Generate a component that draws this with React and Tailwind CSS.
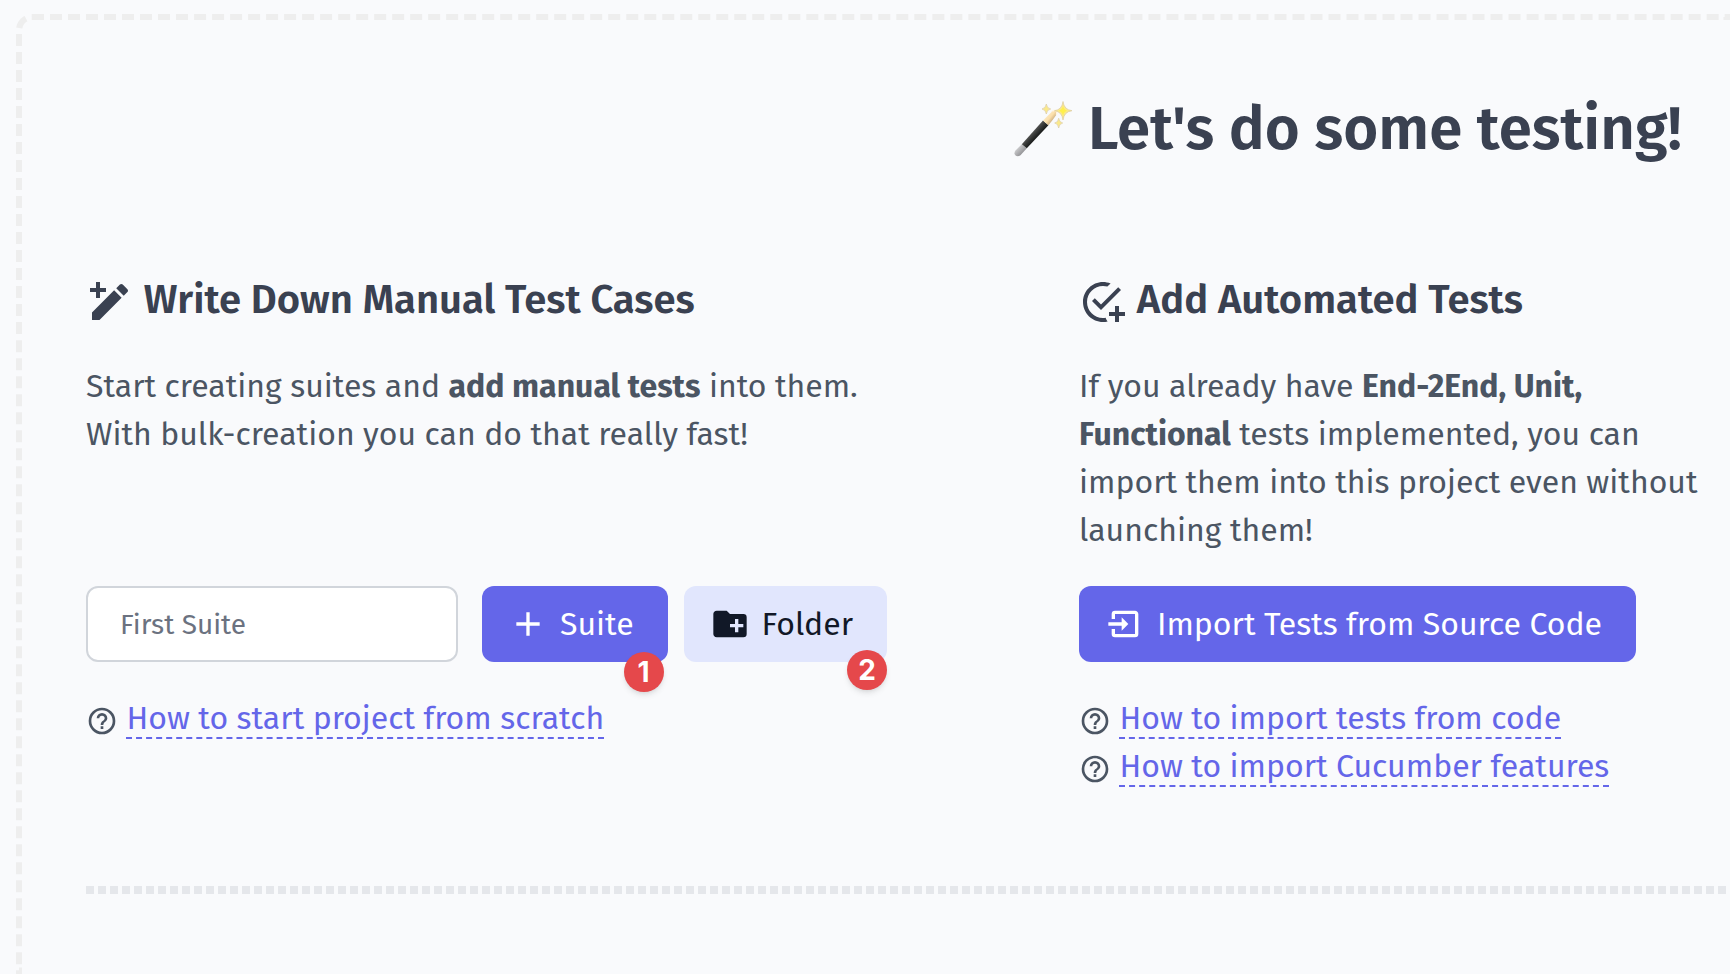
const PATHS = {
  pencilPlus:
    "M20.71,7.04C21.1,6.65 21.1,6 20.71,5.63L18.37,3.29C18,2.9 17.35,2.9 16.96,3.29L15.12,5.12L18.87,8.87M3,17.25V21H6.75L17.81,9.93L14.06,6.18L3,17.25ZM7,2V5H10V7H7V10H5V7H2V5H5V2H7Z",
  checkPlus:
    "M14.3 21.7C13.6 21.9 12.8 22 12 22C6.5 22 2 17.5 2 12S6.5 2 12 2C13.3 2 14.6 2.3 15.8 2.7L14.2 4.3C13.5 4.1 12.8 4 12 4C7.6 4 4 7.6 4 12S7.6 20 12 20C12.4 20 12.9 20 13.3 19.9C13.5 20.6 13.9 21.2 14.3 21.7M7.9 10.1L6.5 11.5L11 16L21 6L19.6 4.6L11 13.2L7.9 10.1M18 14V17H15V19H18V22H20V19H23V17H20V14H18Z",
  plus: "M19,13H13V19H11V13H5V11H11V5H13V11H19V13Z",
  folderPlus:
    "M10,4L12,6H20A2,2 0 0,1 22,8V18A2,2 0 0,1 20,20H4C2.89,20 2,19.1 2,18V6C2,4.89 2.89,4 4,4H10M15,9V12H12V14H15V17H17V14H20V12H17V9H15Z",
  importBox:
    "M14,12L10,8V11H2V13H10V16M20,18V6C20,4.89 19.1,4 18,4H6A2,2 0 0,0 4,6V9H6V6H18V18H6V15H4V18A2,2 0 0,0 6,20H18A2,2 0 0,0 20,18Z",
  help: "M11,18H13V16H11V18M12,2A10,10 0 0,0 2,12A10,10 0 0,0 12,22A10,10 0 0,0 22,12A10,10 0 0,0 12,2M12,20C7.59,20 4,16.41 4,12C4,7.59 7.59,4 12,4C16.41,4 20,7.59 20,12C20,16.41 16.41,20 12,20M12,6A4,4 0 0,0 8,10H10A2,2 0 0,1 12,8A2,2 0 0,1 14,10C14,12 11,11.75 11,15H13C13,12.75 16,12.5 16,10A4,4 0 0,0 12,6Z",
};

function Icon({ name, className }) {
  return (
    <svg viewBox="0 0 24 24" fill="currentColor" aria-hidden="true" className={className}>
      <path d={PATHS[name]} />
    </svg>
  );
}

function Wand() {
  return (
    <svg viewBox="2 1 60 60" aria-hidden="true" className="inline-block h-[60px] w-[60px] overflow-visible align-middle">
      <defs>
        <linearGradient id="barrel" gradientUnits="userSpaceOnUse" x1="21" y1="29" x2="27" y2="34.500">
          <stop offset="0" stopColor="#5c5c5a" />
          <stop offset="0.45" stopColor="#3b3c3b" />
          <stop offset="1" stopColor="#171918" />
        </linearGradient>
        <linearGradient id="tip" gradientUnits="userSpaceOnUse" x1="36" y1="12" x2="43" y2="18">
          <stop offset="0" stopColor="#fbe9c4" />
          <stop offset="0.5" stopColor="#fbdfaa" />
          <stop offset="1" stopColor="#c7a87a" />
        </linearGradient>
        <linearGradient id="cap" gradientUnits="userSpaceOnUse" x1="5" y1="45" x2="11" y2="51">
          <stop offset="0" stopColor="#d9d9da" />
          <stop offset="1" stopColor="#98989b" />
        </linearGradient>
      </defs>
      <path d="M10.800 42.200L15.800 46.300L9.500 53.200Q6.500 55.300 4.300 53.300Q2.600 51.200 4.500 48.600Z" fill="url(#cap)" />
      <path d="M10.800 42.200L32 18.400L37.400 23.200L15.800 46.300Z" fill="url(#barrel)" />
      <path d="M32 18.400L41.300 9.300Q43.500 7.500 45.200 9Q46.700 10.500 45.200 13Q41.500 18.500 37.400 23.200Z" fill="url(#tip)" />
      <path d="M41.500 9.200Q43.600 7.500 45.200 9Q46.700 10.500 45.300 12.800" fill="none" stroke="#fff6e4" strokeWidth="1.400" />
      <g fill="#fbe98a" stroke="#dccba0" strokeWidth="0.700" strokeLinejoin="round">
        <path d="M52 -0.500Q53 7.700 61 8.700Q53 9.700 52 18Q51 9.700 43.500 8.700Q51 7.700 52 -0.500Z" />
        <path d="M35.300 2Q35.800 6.400 39.700 7Q35.800 7.600 35.300 12Q34.800 7.600 31 7Q34.800 6.400 35.300 2Z" />
        <path d="M47.700 16.200Q48.200 20.400 51.700 21Q48.200 21.600 47.700 26Q47.200 21.600 43.700 21Q47.200 20.400 47.700 16.200Z" />
      </g>
      <path d="M52 4Q52.900 7.800 56 8.700Q52.900 9.600 52 13.500Q51.100 9.600 48 8.700Q51.100 7.800 52 4Z" fill="#fff04a" />
    </svg>
  );
}

function SectionTitle({ icon, children }) {
  return (
    <h2 className="text-[40px] leading-[60px] font-semibold text-[#3a4151]">
      <Icon name={icon} className="inline-block size-12 align-middle" /> {children}
    </h2>
  );
}

function HelpLink({ children }) {
  return (
    <li>
      <Icon name="help" className="inline-block size-8 align-middle" />{" "}
      <a href="#" className="border-b-2 border-dashed border-[#6466e9] text-[#6466e9]">
        {children}
      </a>
    </li>
  );
}

function Button({ icon, tone, children }) {
  return (
    <button
      type="button"
      className={`flex h-[76px] items-center gap-3 rounded-xl pr-[34px] pl-[26px] whitespace-nowrap ${tone}`}
    >
      <Icon name={icon} className="size-10 shrink-0" />
      {children}
    </button>
  );
}

function Badge({ className, children }) {
  return (
    <span
      className={`absolute flex size-10 items-center justify-center rounded-full bg-[#e5484b] font-['Inter',sans-serif] text-[28px] leading-none font-bold text-white shadow-md ${className}`}
    >
      {children}
    </span>
  );
}

export default function App() {
  return (
    <div className="flex min-h-screen flex-col overflow-x-hidden bg-[#f9fafc] pt-3.5 pl-4 font-['Fira_Sans','Noto_Sans',sans-serif] text-[32px] leading-[48px] text-[#4b5563]">
      <main className="flex-1 rounded-tl-2xl border-t-6 border-l-6 border-dashed border-[#eeeeee] pt-[73px] pl-16">
        <h1 className="pr-12 text-right text-[60px] leading-[72px] font-semibold whitespace-nowrap text-[#3a4151]">
          <Wand /> Let's do some testing!
        </h1>

        <div className="mt-[105px] grid grid-cols-[993fr_651fr]">
          <section>
            <SectionTitle icon="pencilPlus">Write Down Manual Test Cases</SectionTitle>
            <p className="mt-8 min-h-48 max-w-[800px]">
              Start creating suites and <strong className="font-bold">add manual tests</strong> into them. With
              bulk-creation you can do that really fast!
            </p>
            <form className="mt-8 flex">
              <input
                type="text"
                aria-label="First Suite"
                placeholder="First Suite"
                className="mr-6 h-[76px] w-[372px] rounded-xl border-2 border-[#d1d5db] bg-white px-8 text-[28px] placeholder:text-[#6b7280]"
              />
              <div className="relative mr-4">
                <Button icon="plus" tone="bg-[#6466e9] text-white">
                  Suite
                </Button>
                <Badge className="right-1 -bottom-[30px]">1</Badge>
              </div>
              <div className="relative">
                <Button icon="folderPlus" tone="bg-[#e1e6fd] text-[#111827]">
                  Folder
                </Button>
                <Badge className="right-0 -bottom-7">2</Badge>
              </div>
            </form>
            <ul className="mt-8">
              <HelpLink>How to start project from scratch</HelpLink>
            </ul>
          </section>

          <section>
            <SectionTitle icon="checkPlus">Add Automated Tests</SectionTitle>
            <p className="mt-8 min-h-48 pr-3">
              If you already have <strong className="font-bold">End-2End, Unit, Functional</strong> tests implemented,
              you can import them into this project even without launching them!
            </p>
            <div className="mt-8 flex">
              <Button icon="importBox" tone="bg-[#6466e9] text-white">
                Import Tests from Source Code
              </Button>
            </div>
            <ul className="mt-8">
              <HelpLink>How to import tests from code</HelpLink>
              <HelpLink>How to import Cucumber features</HelpLink>
            </ul>
          </section>
        </div>

        <div className="mt-24 h-2 bg-[repeating-linear-gradient(to_right,#e5e7eb_0_8px,transparent_8px_12px)]" />
      </main>
    </div>
  );
}
